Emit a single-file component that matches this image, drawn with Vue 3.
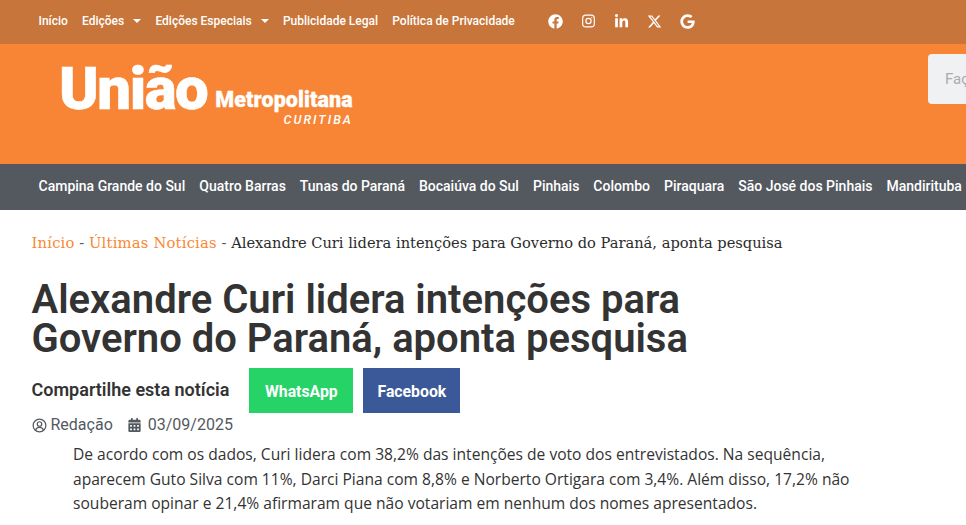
<script setup>
const cities = ['Campina Grande do Sul','Quatro Barras','Tunas do Paraná','Bocaiúva do Sul','Pinhais','Colombo','Piraquara','São José dos Pinhais','Mandirituba','Araucária']
</script>

<template>
  <div class="page">
    <div class="topbar">
      <nav class="topnav">
        <a>Início</a>
        <a class="dd">Edições <i class="caret"></i></a>
        <a class="dd">Edições Especiais <i class="caret"></i></a>
        <a>Publicidade Legal</a>
        <a>Política de Privacidade</a>
      </nav>
      <div class="social">
        <svg viewBox="0 0 512 512" height="15"><path fill="#fff" d="M504 256C504 119 393 8 256 8S8 119 8 256c0 123.780 90.690 226.380 209.250 245V327.690h-63V256h63v-54.640c0-62.150 37-96.480 93.670-96.480 27.140 0 55.520 4.840 55.520 4.840v61h-31.280c-30.800 0-40.410 19.120-40.410 38.730V256h68.780l-11 71.690h-57.780V501C413.310 482.380 504 379.780 504 256z"/></svg>
        <svg viewBox="0 0 24 24" height="14" fill="none" stroke="#fff" stroke-width="2"><rect x="2" y="2" width="20" height="20" rx="5.500"/><circle cx="12" cy="12" r="4.500"/><circle cx="17.700" cy="6.300" r="1" fill="#fff" stroke="none"/></svg>
        <svg viewBox="0 0 448 512" height="15"><path fill="#fff" d="M100.280 448H7.400V148.900h92.880zM53.790 108.100C24.090 108.100 0 83.500 0 53.800a53.790 53.790 0 0 1 107.580 0c0 29.700-24.100 54.300-53.790 54.300zM447.900 448h-92.680V302.400c0-34.700-.7-79.200-48.290-79.200-48.290 0-55.690 37.700-55.690 76.700V448h-92.780V148.900h89.080v40.800h1.300c12.400-23.500 42.690-48.300 87.880-48.300 94 0 111.280 61.900 111.280 142.300V448z"/></svg>
        <svg viewBox="0 0 512 512" height="15"><path fill="#fff" d="M389.200 48h70.600L305.600 224.200 487 464H345L233.700 318.600 106.500 464H35.800L200.700 275.500 26.800 48H172.400L272.900 180.900 389.200 48zM364.400 421.800h39.100L151.100 88h-42L364.400 421.800z"/></svg>
        <svg viewBox="0 0 488 512" height="15"><path fill="#fff" d="M488 261.800C488 403.300 391.100 504 248 504 110.800 504 0 393.200 0 256S110.800 8 248 8c66.800 0 123 24.500 166.300 64.900l-67.500 64.900C258.500 52.600 94.300 116.600 94.300 256c0 86.500 69.100 156.600 153.700 156.600 98.200 0 135-70.400 140.800-106.900H248v-85.300h236.100c2.300 12.700 3.900 24.900 3.900 41.400z"/></svg>
      </div>
    </div>

    <header class="brand">
      <div class="logo">
        <span class="logo-main">União</span>
        <span class="logo-side">
          <span class="logo-metro">Metropolitana</span>
          <span class="logo-city">CURITIBA</span>
        </span>
      </div>
      <input class="search" placeholder="Faça sua busca" />
    </header>

    <nav class="cities">
      <a v-for="c in cities" :key="c">{{ c }}</a>
    </nav>

    <main class="content">
      <p class="crumbs"><a>Início</a> - <a>Últimas Notícias</a> - <span>Alexandre Curi lidera intenções para Governo do Paraná, aponta pesquisa</span></p>
      <h1>Alexandre Curi lidera intenções para Governo do Paraná, aponta pesquisa</h1>
      <div class="share">
        <strong>Compartilhe esta notícia</strong>
        <a class="btn wa">WhatsApp</a>
        <a class="btn fb">Facebook</a>
      </div>
      <div class="meta">
        <span class="mi user">
          <svg viewBox="0 0 16 16" width="15" height="15" fill="none" stroke="#54595f" stroke-width="1.300"><circle cx="8" cy="8" r="6.800"/><circle cx="8" cy="6.400" r="2.400"/><path d="M3.700 13c.8-2 2.400-2.900 4.300-2.900s3.500.9 4.300 2.900"/></svg>
          Redação
        </span>
        <span class="mi date">
          <svg viewBox="0 0 448 512" width="13" height="14"><path fill="#54595f" d="M0 464c0 26.500 21.500 48 48 48h352c26.500 0 48-21.500 48-48V192H0v272zm320-196c0-6.600 5.400-12 12-12h40c6.600 0 12 5.400 12 12v40c0 6.600-5.400 12-12 12h-40c-6.600 0-12-5.400-12-12v-40zm0 128c0-6.600 5.400-12 12-12h40c6.600 0 12 5.400 12 12v40c0 6.600-5.400 12-12 12h-40c-6.600 0-12-5.400-12-12v-40zM192 268c0-6.600 5.400-12 12-12h40c6.600 0 12 5.400 12 12v40c0 6.600-5.400 12-12 12h-40c-6.600 0-12-5.400-12-12v-40zm0 128c0-6.600 5.400-12 12-12h40c6.600 0 12 5.400 12 12v40c0 6.600-5.400 12-12 12h-40c-6.600 0-12-5.400-12-12v-40zM64 268c0-6.600 5.400-12 12-12h40c6.600 0 12 5.400 12 12v40c0 6.600-5.400 12-12 12H76c-6.600 0-12-5.400-12-12v-40zm0 128c0-6.600 5.400-12 12-12h40c6.600 0 12 5.400 12 12v40c0 6.600-5.400 12-12 12H76c-6.600 0-12-5.400-12-12v-40zM400 64h-48V16c0-8.800-7.200-16-16-16h-32c-8.800 0-16 7.200-16 16v48H160V16c0-8.800-7.200-16-16-16h-32c-8.800 0-16 7.200-16 16v48H48C21.500 64 0 85.500 0 112v48h448v-48c0-26.500-21.500-48-48-48z"/></svg>
          03/09/2025
        </span>
      </div>
      <p class="body">De acordo com os dados, Curi lidera com 38,2% das intenções de voto dos entrevistados. Na sequência, aparecem Guto Silva com 11%, Darci Piana com 8,8% e Norberto Ortigara com 3,4%. Além disso, 17,2% não souberam opinar e 21,4% afirmaram que não votariam em nenhum dos nomes apresentados.</p>
    </main>
  </div>
</template>

<style>
html, body { margin: 0; overflow: hidden; background: #fff; }
</style>

<style scoped>
.page { width: 966px; height: 525px; overflow: hidden; font-family: Roboto, sans-serif; background: #fff; }
.topbar { height: 44px; box-sizing: border-box; padding: 0 0 2px 38.500px; background: #c7753a; display: flex; align-items: center; }
.topnav { display: flex; gap: 14.200px; font-size: 12px; font-weight: 500; color: #fff; white-space: nowrap; }
.dd { display: flex; align-items: center; gap: 9px; }
.caret { width: 0; height: 0; border-left: 4.500px solid transparent; border-right: 4.500px solid transparent; border-top: 4px solid #fff; }
.social { display: flex; align-items: center; margin-left: 24.500px; }
.social svg { width: 33px; }
.brand { height: 120px; background: #f88535; position: relative; box-sizing: border-box; padding: 14.500px 0 0 59px; }
.logo { display: flex; align-items: flex-start; color: #fff; }
.logo-main { font-size: 60px; font-weight: 900; line-height: 60px; letter-spacing: -1.500px; -webkit-text-stroke: .5px #fff; }
.logo-side { display: flex; flex-direction: column; margin: 30.500px 0 0 8px; align-items: flex-end; }
.logo-metro { font-size: 21.500px; font-weight: 900; line-height: 22px; letter-spacing: .1px; -webkit-text-stroke: .3px #fff; }
.logo-city { margin-top: 2.700px; font-size: 12.500px; font-style: italic; font-weight: 500; letter-spacing: 2px; line-height: 12px; }
.search { position: absolute; left: 928px; top: 10px; width: 300px; height: 50px; box-sizing: border-box; border: 0; border-radius: 4px; background: #f0f1f3; padding: 0 17px; font: 15px Roboto, sans-serif; }
.search::placeholder { color: #a9abae; }
.cities { height: 46px; box-sizing: border-box; padding: 0 0 2px 38.500px; background: #54595f; display: flex; align-items: center; gap: 14px; color: #fff; font-size: 14px; font-weight: 500; white-space: nowrap; }
.content { padding: 0 31.500px; }
.crumbs { margin: 24px 0 0; font-family: "DejaVu Serif", serif; font-size: 14.750px; line-height: 18px; color: #54595f; white-space: nowrap; }
.crumbs a { color: #f98733; letter-spacing: .2px; }
.crumbs span { color: #2b2b2b; font-size: 14.650px; }
h1 { margin: 28px 0 0; width: 700px; font-size: 40px; line-height: 39px; font-weight: 600; color: #333; }
.share { display: flex; align-items: center; margin-top: 10px; }
.share strong { font-size: 18px; font-weight: 600; color: #333; margin-right: 20px; padding-bottom: 2px; }
.btn { height: 45px; box-sizing: border-box; padding-top: 2px; display: flex; align-items: center; justify-content: center; color: #fff; font-size: 15.800px; font-weight: 700; }
.wa { width: 104px; background: #25d366; margin-right: 10px; }
.fb { width: 97px; background: #3b5998; }
.meta { display: flex; gap: 15px; margin-top: 1px; font-size: 16px; line-height: 22px; color: #54595f; }
.mi { display: flex; align-items: center; }
.user { gap: 4px; }
.date { gap: 7px; }
.body { margin: 6px 0 0 41.500px; width: 790px; font-family: "Open Sans", sans-serif; font-size: 15.600px; line-height: 24.500px; color: #333; }
</style>
